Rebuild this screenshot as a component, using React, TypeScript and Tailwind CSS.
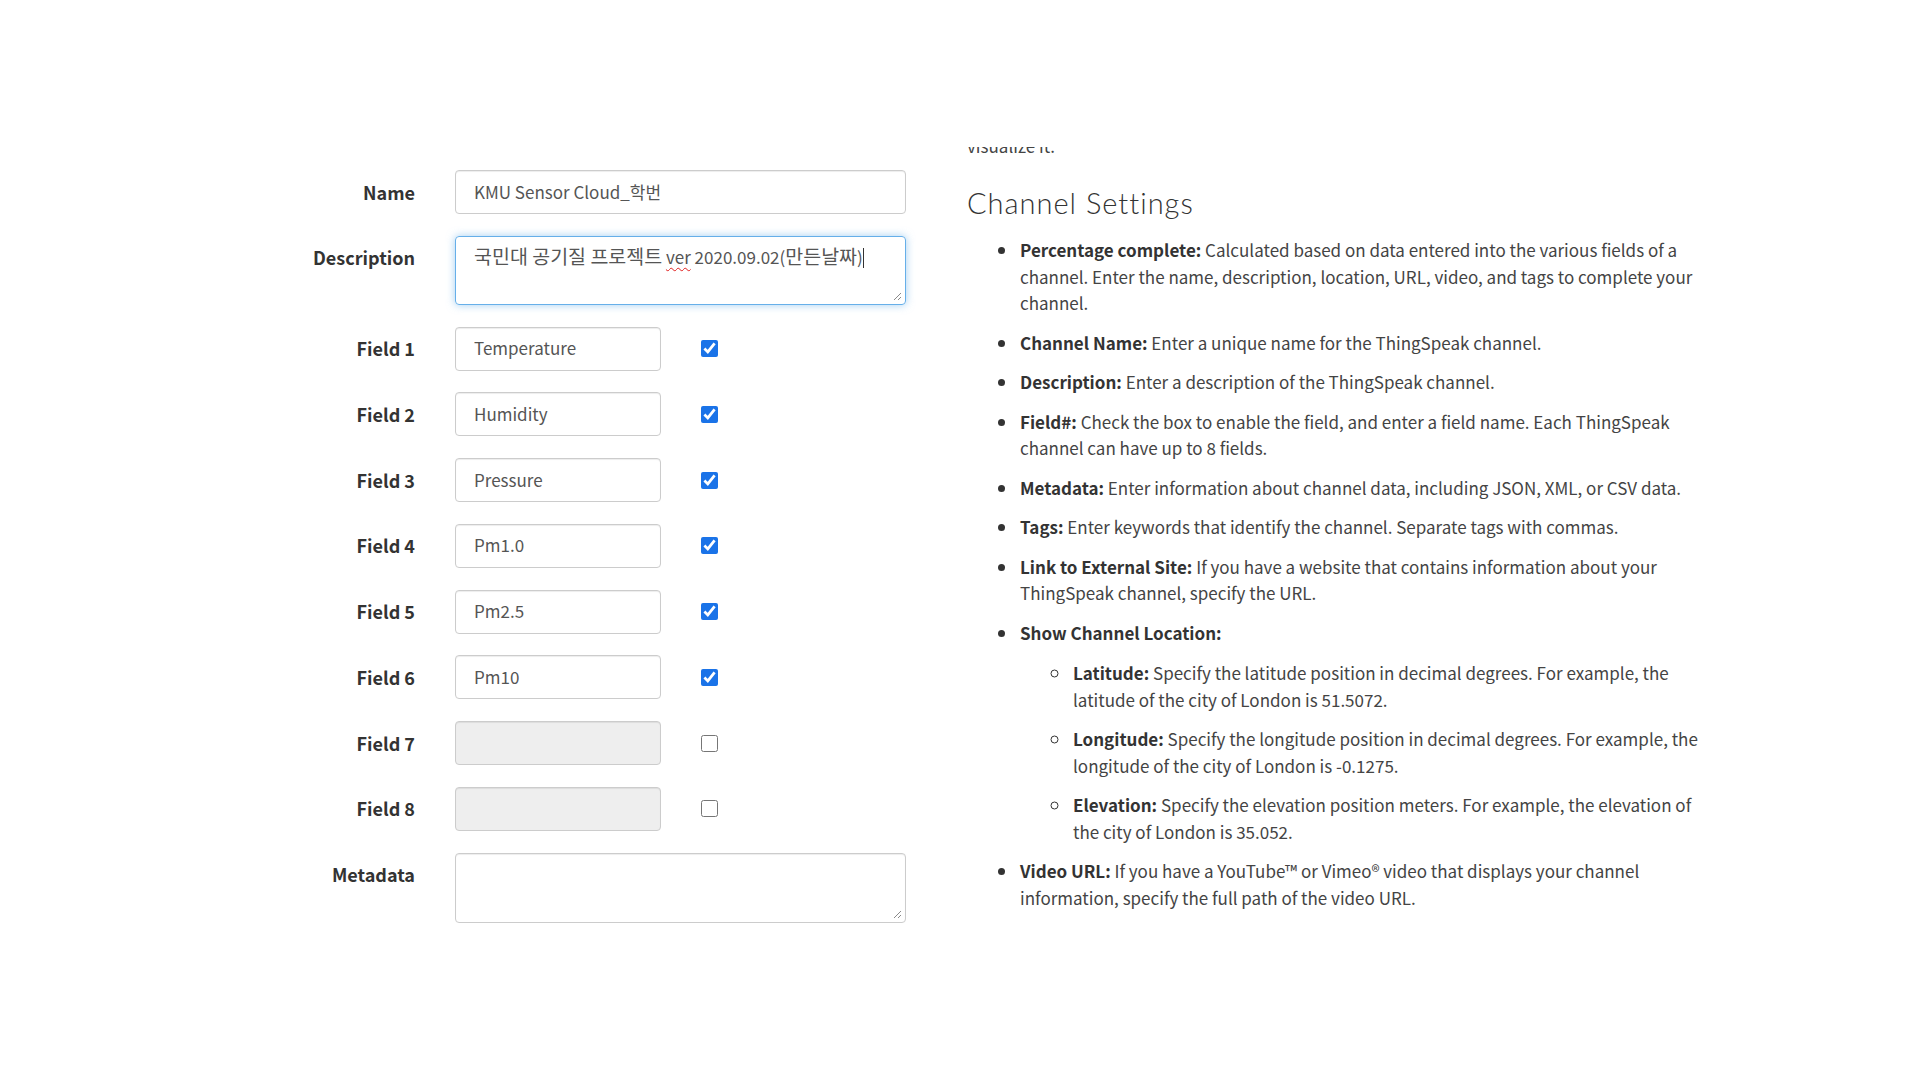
const body = '"Noto Sans CJK KR", "Noto Sans", sans-serif';

interface FieldRow {
  label: string;
  value: string;
  enabled: boolean;
}

const fields: FieldRow[] = [
  { label: "Field 1", value: "Temperature", enabled: true },
  { label: "Field 2", value: "Humidity", enabled: true },
  { label: "Field 3", value: "Pressure", enabled: true },
  { label: "Field 4", value: "Pm1.0", enabled: true },
  { label: "Field 5", value: "Pm2.5", enabled: true },
  { label: "Field 6", value: "Pm10", enabled: true },
  { label: "Field 7", value: "", enabled: false },
  { label: "Field 8", value: "", enabled: false },
];

function Grip() {
  return (
    <svg
      className="absolute right-[3px] bottom-[3px]"
      width="10"
      height="10"
      viewBox="0 0 10 10"
    >
      <path d="M9 2 L2 9 M9 6 L6 9" stroke="#8a8a8a" strokeWidth="1" />
    </svg>
  );
}

function Label({ children }: { children: string }) {
  return (
    <div className="w-[115px] h-[44px] shrink-0 flex items-center justify-end text-[18px] font-semibold text-[#333]">
      {children}
    </div>
  );
}

function Help({ title, children }: { title: string; children?: React.ReactNode }) {
  return (
    <li className="mb-[13px] pl-[2px]">
      <b className="font-semibold text-[#333]">{title}</b> {children}
    </li>
  );
}

export default function App() {
  return (
    <div
      className="min-h-screen w-full bg-white flex pt-[170px] pl-[300px]"
      style={{ fontFamily: body }}
    >
      <form className="w-[606px] flex flex-col gap-[21.75px] shrink-0">
        <div className="flex gap-[40px]">
          <Label>Name</Label>
          <input
            readOnly
            value="KMU Sensor Cloud_학번"
            className="w-[451px] h-[44px] px-[18px] pb-[2px] border border-[#ccc] rounded-[4px] text-[17px] text-[#555] shadow-[inset_0_1px_1px_rgba(0,0,0,0.075)] outline-none"
            style={{ fontFamily: body }}
          />
        </div>

        <div className="flex gap-[40px]">
          <Label>Description</Label>
          <div className="relative w-[451px] h-[69px] px-[18px] pt-[6px] border border-[#66afe9] rounded-[4px] text-[17px] leading-[26px] text-[#555] shadow-[0_0_8px_rgba(102,175,233,0.6)]">
            <span className="text-[19.5px]">국민대 공기질 프로젝트</span>{" "}
            <span className="underline decoration-wavy decoration-[#e02020] decoration-1 underline-offset-[3px]">
              ver
            </span>{" "}
            2020.09.02(<span className="text-[19.5px]">만든날짜</span>)
            <span className="inline-block w-px h-[20px] bg-[#333] align-[-4px]" />
            <Grip />
          </div>
        </div>

        {fields.map((f) => (
          <div key={f.label} className="flex gap-[40px] items-center">
            <Label>{f.label}</Label>
            <input
              readOnly
              disabled={!f.enabled}
              value={f.value}
              className={
                f.enabled
                  ? "w-[206px] h-[44px] px-[18px] pb-[2px] border border-[#ccc] rounded-[4px] text-[17px] text-[#555] bg-white shadow-[inset_0_1px_1px_rgba(0,0,0,0.075)] outline-none"
                  : "w-[206px] h-[44px] px-[18px] pb-[2px] border border-[#ccc] rounded-[4px] text-[17px] text-[#555] bg-[#eee] shadow-[inset_0_1px_1px_rgba(0,0,0,0.075)] outline-none"
              }
              style={{ fontFamily: body }}
            />
            <input
              type="checkbox"
              readOnly
              checked={f.enabled}
              className="w-[17px] h-[17px] accent-[#1a73e8]"
            />
          </div>
        ))}

        <div className="flex gap-[40px]">
          <Label>Metadata</Label>
          <div className="relative w-[451px] h-[70px] border border-[#ccc] rounded-[4px] shadow-[inset_0_1px_1px_rgba(0,0,0,0.075)]">
            <Grip />
          </div>
        </div>
      </form>

      <div className="ml-[61px] mt-[-23px] w-[738px] h-[800px] overflow-hidden text-[17px] leading-[26.5px] text-[#444]">
        <p className="mt-[-14px]">visualize it.</p>

        <h3
          className="mt-[27.5px] text-[29px] leading-[31px] font-light text-[#333] tracking-[1px]"
          style={{ fontFamily: '"Lato", "Open Sans", sans-serif' }}
        >
          Channel Settings
        </h3>

        <ul className="mt-[19px] pl-[51px] list-disc marker:text-[#333]">
          <Help title="Percentage complete:">
            Calculated based on data entered into the various fields of a channel. Enter the
            name, description, location, URL, video, and tags to complete your channel.
          </Help>
          <Help title="Channel Name:">Enter a unique name for the ThingSpeak channel.</Help>
          <Help title="Description:">Enter a description of the ThingSpeak channel.</Help>
          <Help title="Field#:">
            Check the box to enable the field, and enter a field name. Each ThingSpeak channel
            can have up to 8 fields.
          </Help>
          <Help title="Metadata:">
            Enter information about channel data, including JSON, XML, or CSV data.
          </Help>
          <Help title="Tags:">Enter keywords that identify the channel. Separate tags with commas.</Help>
          <Help title="Link to External Site:">
            If you have a website that contains information about your ThingSpeak channel,
            specify the URL.
          </Help>
          <li className="mb-[13px] pl-[2px]">
            <b className="font-semibold text-[#333]">Show Channel Location:</b>
            <ul className="mt-[14px] pl-[51px] list-[circle]">
              <Help title="Latitude:">
                Specify the latitude position in decimal degrees. For example, the latitude of
                the city of London is 51.5072.
              </Help>
              <Help title="Longitude:">
                Specify the longitude position in decimal degrees. For example, the longitude of
                the city of London is -0.1275.
              </Help>
              <Help title="Elevation:">
                Specify the elevation position meters. For example, the elevation of the city of
                London is 35.052.
              </Help>
            </ul>
          </li>
          <Help title="Video URL:">
            If you have a YouTube™ or Vimeo® video that displays your channel information,
            specify the full path of the video URL.
          </Help>
        </ul>
      </div>
    </div>
  );
}
